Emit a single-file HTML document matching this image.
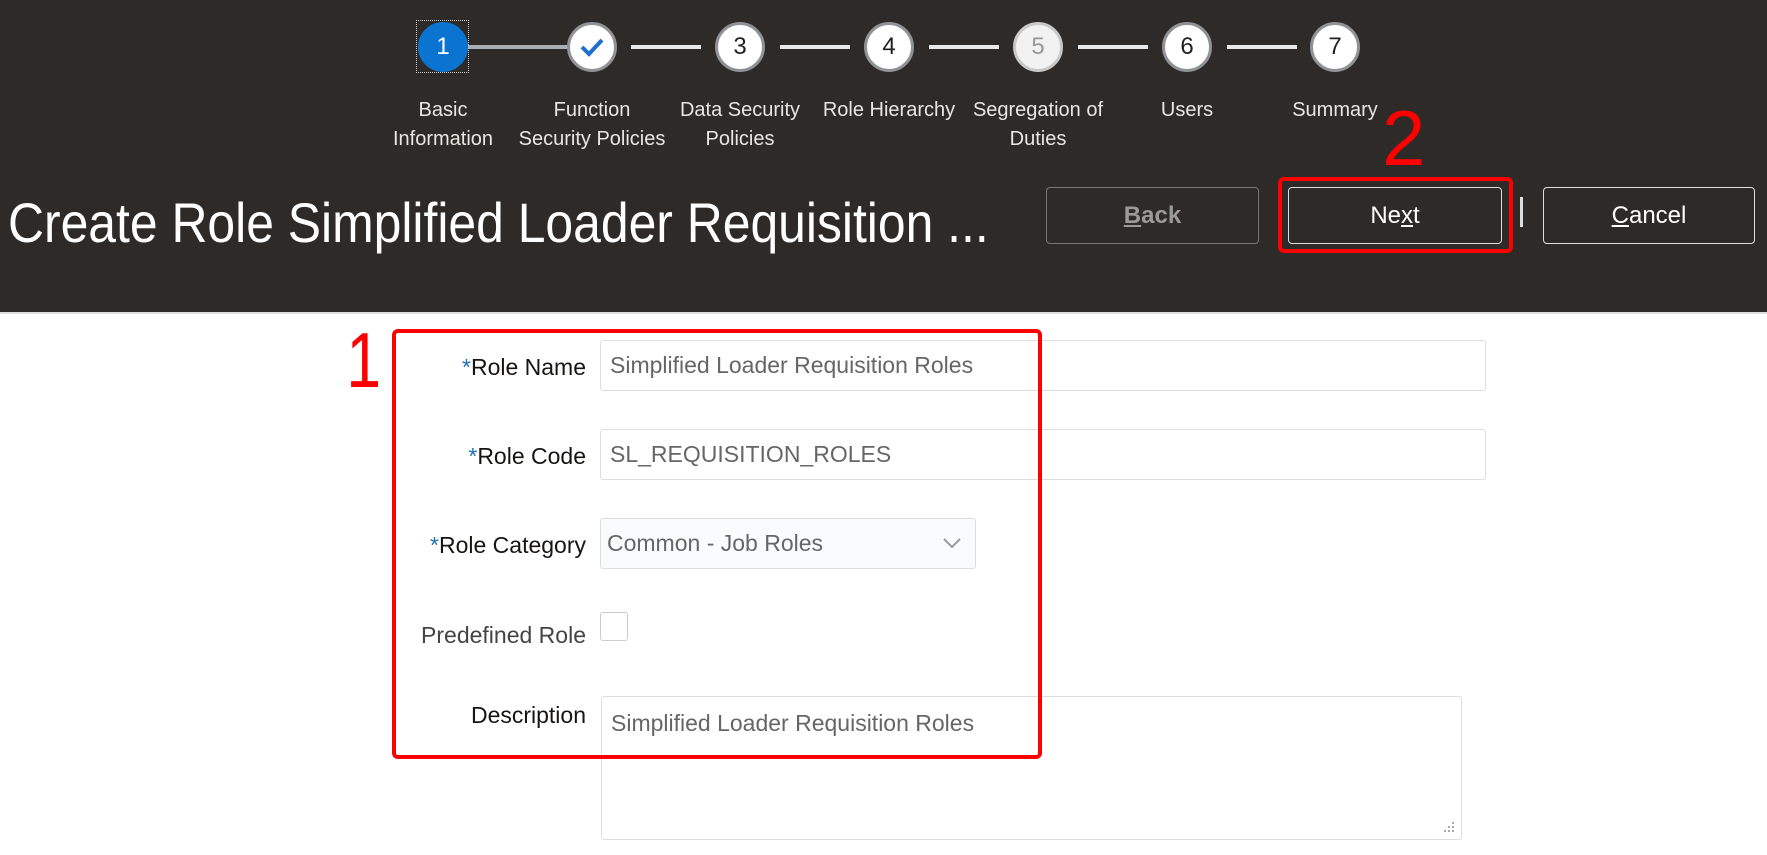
<!DOCTYPE html>
<html><head><meta charset="utf-8"><style>
*{margin:0;padding:0;box-sizing:border-box}
body{width:1767px;height:855px;background:#fff;font-family:"Liberation Sans",sans-serif;position:relative;overflow:hidden}
.hdr{position:absolute;left:0;top:0;width:1767px;height:314px;background:#2e2a27;border-bottom:2px solid #ddd}
.ab{position:absolute}
.c{position:absolute;width:50px;height:50px;border-radius:50%;background:#fff;border:3px solid #8f9296;top:22px;text-align:center;line-height:44px;font-size:24px;color:#222}
.ln{position:absolute;top:45px;height:4px;background:#e8e8e8}
.lb{position:absolute;top:96px;color:#e8e6e0;font-size:20px;text-align:center;line-height:29px;width:170px;white-space:nowrap}
.btn{position:absolute;top:187px;height:57px;border:1px solid #aaa;border-radius:4px;color:#fff;font-size:24px;text-align:center;line-height:55px}
.lab{position:absolute;right:1181px;font-size:23px;color:#161513;white-space:nowrap}
.lab b{color:#1f6fb5;font-weight:normal}
.in{position:absolute;left:600px;border:1px solid #dedede;border-radius:3px;font-size:23px;color:#666;padding-left:9px;background:#fff}
</style></head><body>
<div class="hdr">
 <div class="ln" style="left:468px;width:100px;background:#a9aeb3"></div>
 <div class="ln" style="left:631px;width:70px"></div>
 <div class="ln" style="left:780px;width:70px"></div>
 <div class="ln" style="left:929px;width:70px"></div>
 <div class="ln" style="left:1078px;width:70px"></div>
 <div class="ln" style="left:1227px;width:70px"></div>
 <div class="ab" style="left:416px;top:20px;width:53px;height:53px;border:1px dotted #ccc"></div>
 <div class="c" style="left:418px;background:#0b73d0;border-color:#0b73d0;color:#fff">1</div>
 <div class="c" style="left:567px"><svg width="26" height="20" viewBox="0 0 26 20" style="margin-top:12px"><path d="M3 10l7 7L23 3" fill="none" stroke="#1f6fce" stroke-width="4"/></svg></div>
 <div class="c" style="left:715px">3</div>
 <div class="c" style="left:864px">4</div>
 <div class="c" style="left:1013px;background:#f2f2f2;color:#999;border-color:#c8c8c8">5</div>
 <div class="c" style="left:1162px">6</div>
 <div class="c" style="left:1310px">7</div>
 <div class="lb" style="left:358px">Basic<br>Information</div>
 <div class="lb" style="left:507px">Function<br>Security Policies</div>
 <div class="lb" style="left:655px">Data Security<br>Policies</div>
 <div class="lb" style="left:804px">Role Hierarchy</div>
 <div class="lb" style="left:953px">Segregation of<br>Duties</div>
 <div class="lb" style="left:1102px">Users</div>
 <div class="lb" style="left:1250px">Summary</div>
 <div class="ab" style="left:8px;top:190px;color:#fff;font-size:56px;white-space:nowrap;transform:scaleX(0.89);transform-origin:left">Create Role Simplified Loader Requisition ...</div>
 <div class="btn" style="left:1046px;width:213px;color:#9a9a9a;font-weight:bold;border-color:#777"><u>B</u>ack</div>
 <div class="btn" style="left:1288px;width:214px;border-color:#ddd">Ne<u>x</u>t</div>
 <div class="ab" style="left:1520px;top:197px;width:3px;height:30px;background:#ddd"></div>
 <div class="btn" style="left:1543px;width:212px;border-color:#ddd"><u>C</u>ancel</div>
 <div class="ab" style="left:1278px;top:177px;width:235px;height:76px;border:4px solid #f00;border-radius:6px"></div>
 <div class="ab" style="left:1382px;top:98px;color:#f00;font-size:78px;line-height:80px">2</div>
</div>
<div class="lab" style="top:354px"><b>*</b>Role Name</div>
<div class="in" style="top:340px;width:886px;height:51px;line-height:49px">Simplified Loader Requisition Roles</div>
<div class="lab" style="top:443px"><b>*</b>Role Code</div>
<div class="in" style="top:429px;width:886px;height:51px;line-height:49px">SL_REQUISITION_ROLES</div>
<div class="lab" style="top:532px"><b>*</b>Role Category</div>
<div class="in" style="top:518px;width:376px;height:51px;line-height:49px;background:#fafbfc;padding-left:6px">Common - Job Roles<svg style="position:absolute;right:14px;top:19px" width="18" height="11" viewBox="0 0 18 11"><path d="M1 1l8 8 8-8" fill="none" stroke="#999" stroke-width="2"/></svg></div>
<div class="lab" style="top:622px;color:#444">Predefined Role</div>
<div class="ab" style="left:600px;top:612px;width:28px;height:29px;border:1px solid #ccc;border-radius:3px"></div>
<div class="lab" style="top:702px">Description</div>
<div class="in" style="top:696px;left:601px;width:861px;height:144px;padding-top:13px;line-height:26px">Simplified Loader Requisition Roles
<svg style="position:absolute;right:5px;bottom:5px" width="14" height="14"><g fill="#aaa"><rect x="10" y="2" width="2" height="2"/><rect x="6" y="6" width="2" height="2"/><rect x="10" y="6" width="2" height="2"/><rect x="2" y="10" width="2" height="2"/><rect x="6" y="10" width="2" height="2"/><rect x="10" y="10" width="2" height="2"/></g></svg></div>
<div class="ab" style="left:392px;top:329px;width:650px;height:430px;border:4px solid #f00;border-radius:6px"></div>
<div class="ab" style="left:342px;top:320px;color:#f00;font-size:78px;line-height:80px;transform:scaleX(0.8)">1</div>
</body></html>
